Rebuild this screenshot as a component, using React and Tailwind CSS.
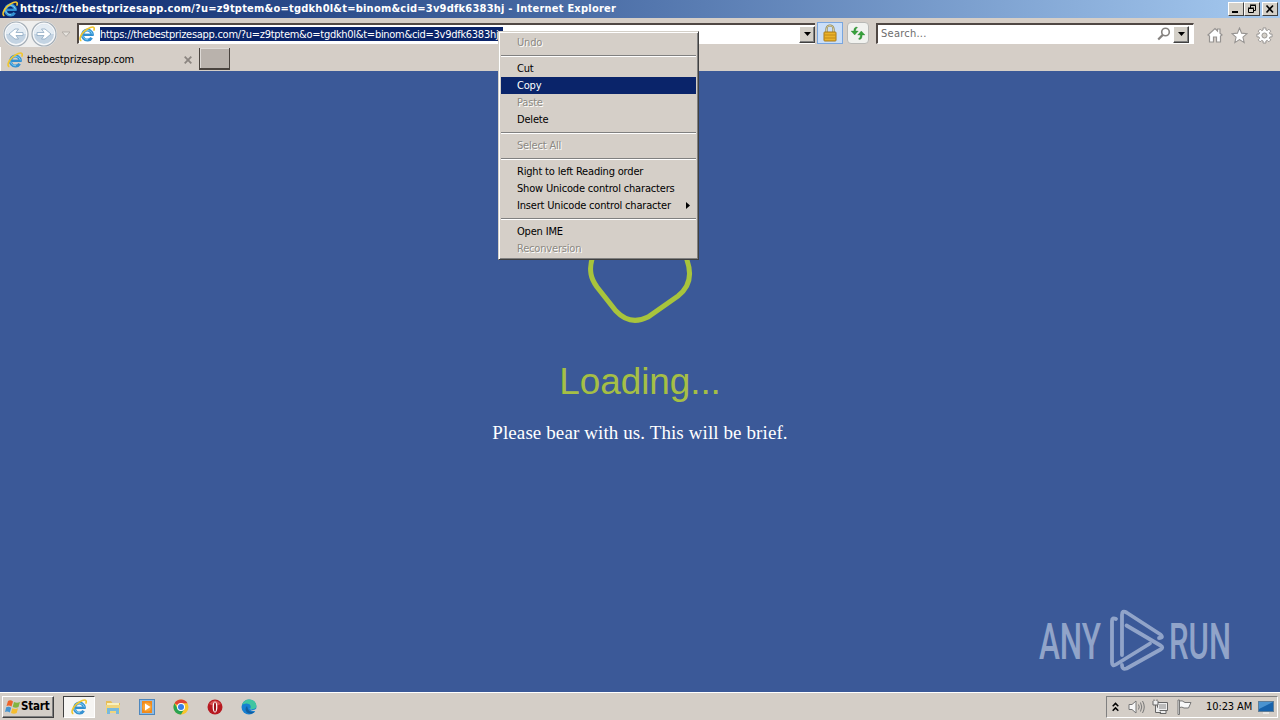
import React from 'react';

const url = 'https://thebestprizesapp.com/?u=z9tptem&o=tgdkh0l&t=binom&cid=3v9dfk6383hj';

const menuItems = [
  { label: 'Undo', disabled: true },
  { separator: true },
  { label: 'Cut' },
  { label: 'Copy', active: true },
  { label: 'Paste', disabled: true },
  { label: 'Delete' },
  { separator: true },
  { label: 'Select All', disabled: true },
  { separator: true },
  { label: 'Right to left Reading order' },
  { label: 'Show Unicode control characters' },
  { label: 'Insert Unicode control character', submenu: true },
  { separator: true },
  { label: 'Open IME' },
  { label: 'Reconversion', disabled: true },
];

const IeIcon = ({ className }) => (
  <svg viewBox="0 0 16 16" className={className} fill="none">
    <path d="M14.700 8.800H5" stroke="#2f8fd0" strokeWidth="2.400" />
    <path d="M13.300 8.800A4.900 5 0 1 0 12.600 11.700" stroke="#3591d2" strokeWidth="3" />
    <path d="M13.500 8.300A5.100 5 0 0 0 3.700 7.700M3.600 9.500A5 5 0 0 0 9 13.700" stroke="#79cdf2" strokeWidth="1" />
    <path d="M2.400 14.700C-0.300 14 1.300 9 5.500 5.200C9.500 1.600 13.900 0 15 1.700C15.500 2.500 15.200 3.600 14.600 4.700" stroke="#f0c62f" strokeWidth="1.600" />
  </svg>
);

const Caret = () => (
  <svg viewBox="0 0 7 4" className="h-1 w-[7px]">
    <path d="M0 0H7L3.500 4Z" fill="#000" />
  </svg>
);

const NavButton = ({ flip }) => (
  <svg viewBox="0 0 26 26" className="h-[26px] w-[26px]">
    <circle cx="13" cy="13" r="12" fill="#f6f8fa" stroke="#a3adb6" strokeWidth="1.200" />
    <circle cx="13" cy="13" r="10" fill="#c3d3e2" />
    <path d="M3 13a10 10 0 0 1 20 0Z" fill="#e4ecf3" />
    <path
      d={flip ? 'M6 11.500H13L10.500 8H14L20 13L14 18H10.500L13 14.500H6Z' : 'M20 11.500H13L15.500 8H12L6 13L12 18H15.500L13 14.500H20Z'}
      fill="#fff"
      stroke="#8ea9c3"
      strokeWidth=".8"
    />
  </svg>
);

const WindowButton = ({ children }) => (
  <div className="flex h-[14px] w-4 items-center justify-center border border-t-white border-l-white border-r-[#404040] border-b-[#404040] bg-[#d4d0c8]">
    <svg viewBox="0 0 12 10" className="h-[10px] w-3" fill="none" stroke="#000">
      {children}
    </svg>
  </div>
);

const DropButton = () => (
  <div className="flex h-[17px] w-4 items-center justify-center border border-t-white border-l-white border-r-[#404040] border-b-[#404040] bg-[#d4d0c8] shadow-[inset_-1px_-1px_0_#808080]">
    <Caret />
  </div>
);

const TitleBar = () => (
  <div className="flex h-[18px] items-center bg-linear-to-r from-[#0a246a] to-[#a6caf0] pl-0.5 pr-0.5">
    <IeIcon className="h-4 w-4" />
    <span className="ml-0.5 pt-px text-[11px] font-bold tracking-[0.225px] text-white">{url} - Internet Explorer</span>
    <div className="ml-auto flex">
      <WindowButton>
        <path d="M2 8H8" strokeWidth="2" />
      </WindowButton>
      <WindowButton>
        <path d="M4.500 4V1.500H9.500V6.500H8M4 1H10M2.500 4.500H7.500V8.500H2.500ZM2 4H8" />
      </WindowButton>
      <div className="ml-0.5">
        <WindowButton>
          <path d="M2.500 1.500L9 8.500M9 1.500L2.500 8.500" strokeWidth="1.700" />
        </WindowButton>
      </div>
    </div>
  </div>
);

const Toolbar = () => (
  <div className="flex h-[29px] items-start pt-[3px] pl-[3px]">
    <div className="flex w-[74px] items-center">
      <div className="flex gap-[2px] rounded-full bg-[#efefee]">
        <NavButton />
        <NavButton flip />
      </div>
      <svg viewBox="0 0 10 7" className="ml-1 h-[7px] w-[10px]">
        <path d="M1 1H9L5 5.500Z" fill="#e6e3de" stroke="#aaa5a0" strokeWidth=".8" />
      </svg>
    </div>
    <div className="mt-[2px] flex h-[21px] w-[738px] items-center border-t-2 border-l-2 border-b border-t-[#504844] border-l-[#504844] border-b-white bg-white">
      <IeIcon className="h-4 w-4" />
      <span className="ml-[5px] h-[14px] w-[403px] bg-[#0a246a] text-[11px] leading-[15px] tracking-[-0.280px] whitespace-nowrap text-white">
        {url}
      </span>
      <div className="ml-auto">
        <DropButton />
      </div>
    </div>
    <div className="mt-px ml-0.5 flex h-[22px] w-[26px] items-center justify-center border border-[#79a6df] bg-[#cbdff8]">
      <svg viewBox="0 0 16 18" className="h-[18px] w-4">
        <path d="M4.500 9V5a3.500 3.500 0 0 1 7 0V9" fill="none" stroke="#8d8353" strokeWidth="2.200" />
        <path d="M4.500 9V5a3.500 3.500 0 0 1 7 0V9" fill="none" stroke="#e8dfae" strokeWidth=".8" />
        <rect x="2" y="8" width="12" height="9" rx=".7" fill="#eab32c" stroke="#a87915" />
        <path d="M2.500 11H13.500M2.500 14H13.500" stroke="#c28a19" />
      </svg>
    </div>
    <div className="mt-px ml-1 flex h-[22px] w-[22px] items-center justify-center rounded-sm border border-[#b9b9b6] bg-[#f1f2ef]">
      <svg viewBox="0 0 16 14" className="h-[14px] w-4" fill="#37a13b" stroke="#247b2b" strokeWidth=".3">
        <path d="M7 1C4.700 1 3.800 2.500 3.800 5H1L4.700 9L8.300 5H5.700C5.700 3.500 6 2.300 7.500 1.800Z" />
        <path d="M9 13.500C11.300 13.500 12.200 12 12.200 9H15L11.300 5L7.700 9H10.300C10.300 11 10 12 8.500 12.700Z" />
      </svg>
    </div>
    <div className="mt-[2px] ml-[7px] flex h-[21px] w-[318px] items-center border-t-2 border-l-2 border-r border-b border-t-[#504844] border-l-[#504844] border-r-white border-b-white bg-white">
      <span className="ml-[3px] pt-px text-[11px] tracking-[0.250px] text-[#6d6d6d]">Search...</span>
      <svg viewBox="0 0 14 14" className="mr-0.5 ml-auto h-[14px] w-[14px]" fill="none" stroke="#85827f">
        <circle cx="8.500" cy="5" r="3.800" strokeWidth="1.600" />
        <path d="M5.800 7.900L1.200 12.500" strokeWidth="2.200" />
      </svg>
      <DropButton />
      <div className="w-1 bg-white" />
    </div>
    <div className="mt-[6px] ml-[13px] flex gap-2">
      <svg viewBox="0 0 16 16" className="h-4 w-4" fill="#fff" stroke="#969391" strokeWidth="1.200">
        <path d="M1 8L8 1.500L10.500 4V2H13V6.200L15 8L13.500 9V15H9.500V10H6.500V15H2.500V9Z" />
      </svg>
      <svg viewBox="0 0 18 18" className="h-[17px] w-[17px]" fill="#fff" stroke="#969391" strokeWidth="1.100">
        <path d="M9 1L11.200 6.500L17 7L12.600 10.700L14 16.500L9 13.300L4 16.500L5.400 10.700L1 7L6.800 6.500Z" />
      </svg>
      <svg viewBox="0 0 18 18" className="h-[17px] w-[17px]" fill="#fff" stroke="#969391">
        <path d="M7.500 1H10.500V3.200L12 3.800L13.600 2.300L15.700 4.400L14.200 6L14.800 7.500H17V10.500H14.800L14.200 12L15.700 13.600L13.600 15.700L12 14.200L10.500 14.800V17H7.500V14.800L6 14.200L4.400 15.700L2.300 13.600L3.800 12L3.200 10.500H1V7.500H3.200L3.800 6L2.300 4.400L4.400 2.300L6 3.800L7.500 3.200Z" />
        <circle cx="9" cy="9" r="2.700" fill="#d4d0c8" />
      </svg>
    </div>
  </div>
);

const Tabs = () => (
  <div className="flex h-6 items-start">
    <div className="flex h-6 w-[199px] items-center border-l border-white pt-px pl-[6px]">
      <IeIcon className="h-4 w-4" />
      <span className="ml-1 pt-px text-[11px] tracking-[-0.150px]">thebestprizesapp.com</span>
      <svg viewBox="0 0 8 8" className="mr-[7px] ml-auto h-2 w-2" stroke="#8b8580" strokeWidth="1.800">
        <path d="M.7 .7L7.300 7.300M7.300 .7L.7 7.300" />
      </svg>
    </div>
    <div className="mt-px h-[22px] w-[31px] border-r border-b-2 border-l border-[#49433e] bg-[#b9b2ac] shadow-[inset_1px_1px_0_#dedad6]" />
  </div>
);

const ContextMenu = () => (
  <div className="absolute top-[31px] left-[498px] w-[201px] border border-t-[#d4d0c8] border-l-[#d4d0c8] border-r-[#404040] border-b-[#404040] bg-[#d5cfc8] p-0.5 text-[11px] shadow-[inset_1px_1px_0_#fff,inset_-1px_-1px_0_#808080]">
    {menuItems.map((item, i) =>
      item.separator ? (
        <div key={i} className="flex h-[9px] items-center">
          <div className="h-0.5 w-full border-t border-b border-t-[#808080] border-b-white" />
        </div>
      ) : (
        <div
          key={i}
          className={`flex h-[17px] items-center justify-between pr-[6px] pl-4 ${
            item.active ? 'bg-[#0a246a] text-white' : ''
          } ${item.disabled ? 'text-[#8c8983] [text-shadow:1px_1px_0_#fff]' : ''}`}
        >
          <span className="pt-px tracking-[-0.180px] whitespace-nowrap">{item.label}</span>
          {item.submenu && (
            <svg viewBox="0 0 4 7" className="h-[7px] w-1">
              <path d="M0 0L4 3.500L0 7Z" />
            </svg>
          )}
        </div>
      )
    )}
  </div>
);

const Watermark = () => (
  <svg
    viewBox="0 0 194 64"
    className="absolute right-[48px] bottom-[19px] h-16 w-[194px] overflow-visible text-[#91a4c9]"
    fill="currentColor"
    fontFamily="Roboto, sans-serif"
    fontSize="50"
    fontWeight="500"
  >
    <text x="1" y="50" textLength="62" lengthAdjust="spacingAndGlyphs">ANY</text>
    <text x="131" y="50" textLength="62" lengthAdjust="spacingAndGlyphs">RUN</text>
    <g fill="none" stroke="currentColor" strokeWidth="3.800" strokeLinecap="round" strokeLinejoin="round">
      <path d="M78 10Q74 8 74 12V53Q74 58 78 55.500L112 34.500" />
      <path d="M84 46V6Q84 .8 88.500 3.500L122.500 25.500Q126 29 121 29" />
      <path d="M88.500 16.500L122.500 36.500Q126 38.500 122.500 40.500L88.500 59.500Q84 61 84 56" />
    </g>
  </svg>
);

const Page = () => (
  <main className="relative flex h-[621px] flex-col items-center bg-[#3b5998]">
    <svg viewBox="0 0 110 110" className="mt-[145px] h-[110px] w-[110px]" fill="none">
      <path
        d="M20 24Q3 40 6 58Q7 64 12 71L31 95Q45 110 63 101L93 80Q110 67 102 44Q90 10 58 9Q35 8 20 24Z"
        stroke="#a8c43c"
        strokeWidth="5"
      />
    </svg>
    <h1 className="mt-[35px] font-['Liberation_Sans',sans-serif] text-[37px] leading-[42px] tracking-[-0.100px] text-[#a5bf45]">
      Loading...
    </h1>
    <p className="mt-[18px] font-['Liberation_Serif',serif] text-[19px] leading-6 tracking-[0.100px] text-white">
      Please bear with us. This will be brief.
    </p>
    <Watermark />
  </main>
);

const TaskBar = () => (
  <div className="flex h-7 items-center border-t border-white bg-[#d4cec7]">
    <div className="ml-0.5 flex h-[22px] w-[52px] items-center border border-t-white border-l-white border-r-[#404040] border-b-[#404040] pl-0.5 shadow-[inset_-1px_-1px_0_#808080]">
      <svg viewBox="0 0 16 16" className="h-4 w-4">
        <path d="M3 2Q5.500 .5 8 2.500L6.500 7.500Q4 5.800 1.500 7Z" fill="#ee6328" />
        <path d="M9 3Q12 4.500 15 3L13.500 8Q11 9.500 7.700 7.900Z" fill="#82b440" />
        <path d="M1.200 8.200Q4 7 6.200 8.700L4.800 13.500Q2.500 12 0 13Z" fill="#4594d0" />
        <path d="M7.300 9.200Q10 10.700 13 9.300L11.700 14Q9 15.500 6 14Z" fill="#f5bd2f" />
      </svg>
      <span className="pt-px text-[11.500px] font-bold tracking-[-0.200px]">Start</span>
    </div>
    <div className="ml-[9px] flex h-[22px] w-8 items-center justify-center border border-t-[#404040] border-l-[#404040] border-r-white border-b-white bg-[#f6f5f3]">
      <IeIcon className="h-4 w-4" />
    </div>
    <div className="ml-[10px] flex items-center gap-[18px]">
      <svg viewBox="0 0 16 16" className="h-4 w-4">
        <path d="M1 2H6L7.500 4H15V14H1Z" fill="#e7bd57" />
        <path d="M2 4H14V8H2Z" fill="#f8f0bd" />
        <path d="M1 6H15V14H1Z" fill="#f0d57d" />
        <path d="M2 15V9H14V15H11V12H5V15Z" fill="#78b9dd" />
      </svg>
      <svg viewBox="0 0 16 16" className="h-4 w-4">
        <rect x=".5" y=".5" width="15" height="15" fill="#8dbbe4" stroke="#4e87bd" />
        <rect x="3" y="2" width="10" height="12" fill="#f08a1c" />
        <circle cx="8" cy="8" r="4.500" fill="#f9a332" />
        <path d="M6 4.500L11.500 8L6 11.500Z" fill="#fff" />
      </svg>
      <svg viewBox="0 0 16 16" className="h-4 w-4">
        <circle cx="8" cy="8" r="7.500" fill="#f8c52b" />
        <path d="M8 8L1.500 4.250A7.500 7.500 0 0 1 14.500 4.250H8Z" fill="#df4334" />
        <path d="M1.500 4.250A7.500 7.500 0 0 0 8 15.500L11.250 9.900L8 8L4.750 9.900Z" fill="#29a352" />
        <circle cx="8" cy="8" r="4" fill="#fff" />
        <circle cx="8" cy="8" r="3" fill="#397fe6" />
      </svg>
      <svg viewBox="0 0 16 16" className="h-4 w-4">
        <circle cx="8" cy="8" r="7.500" fill="#b71920" />
        <path d="M2 5Q8-2 14 5Q8 8 2 5Z" fill="#d75252" />
        <ellipse cx="8" cy="8" rx="2.400" ry="5.500" fill="#fff" />
        <ellipse cx="8" cy="8" rx="1.100" ry="4.700" fill="#9a1117" />
      </svg>
      <svg viewBox="0 0 16 16" className="h-4 w-4">
        <circle cx="8" cy="8" r="7.500" fill="#167fd1" />
        <path d="M1 6Q3 0 9 .5Q15.500 1.500 15.500 7Q15 10.500 10.500 10.200Q8.500 10 9.700 8.500Q10 5 6 4.500Q2.500 4.300 1 6Z" fill="#40c5a1" />
        <path d="M9.700 8.500Q7.500 10 10.500 10.800Q13 11.500 15 9.800L15.500 8V12L13 12Q9 12 9 9Z" fill="#d4cec7" />
        <path d="M6 7Q3 10 6 13.500Q9.500 16 13.500 13Q8 13.500 7 10Z" fill="#145d9d" />
      </svg>
    </div>
    <div className="mr-0.5 ml-auto flex h-[22px] w-[172px] items-center border border-t-[#808080] border-l-[#808080] border-r-white border-b-white pl-[5px]">
      <svg viewBox="0 0 7 10" className="h-[10px] w-[7px]" fill="none" stroke="#000" strokeWidth="1.500">
        <path d="M.7 4.200L3.500 1.400L6.300 4.200M.7 8.700L3.500 5.900L6.300 8.700" />
      </svg>
      <svg viewBox="0 0 17 16" className="ml-[9px] h-4 w-[17px]" fill="#f7f7f7" stroke="#777" strokeWidth="1">
        <path d="M1 5.500H4L8 2V14L4 10.500H1Z" />
        <path d="M10.500 5.500Q12 8 10.500 10.500M12.500 3.500Q15 8 12.500 12.500M14.500 2Q18 8 14.500 14" fill="none" />
      </svg>
      <svg viewBox="0 0 17 16" className="ml-[7px] h-4 w-[17px]" fill="#eee" stroke="#666">
        <path d="M5.500 3.500H15.500V11.500H5.500ZM8 12V14.500H14V12" />
        <path d="M7 5H14V10H7Z" fill="#bbb" stroke="none" />
        <path d="M1 2V6H6V2M3.500 6V13.500H9M2 2V0.500M5 2V0.500" />
      </svg>
      <svg viewBox="0 0 17 16" className="ml-[7px] h-4 w-[17px]" fill="#f8f8f8" stroke="#777">
        <path d="M2 1H3.500V15.500H2ZM3.500 2Q6 1 9 3.500H15L12.500 9H8Q6 7.500 3.500 8.500Z" />
      </svg>
      <span className="ml-[13px] pt-px text-[11px] tracking-[-0.100px] whitespace-nowrap">10:23 AM</span>
      <svg viewBox="0 0 16 14" className="mr-[3px] ml-auto h-[14px] w-4">
        <rect x=".5" y="1.500" width="15" height="10" fill="#1762ab" stroke="#5f7d97" />
        <path d="M1 2H15L1 9Z" fill="#4a93d0" />
        <path d="M5 13H11" stroke="#fff" />
      </svg>
    </div>
  </div>
);

const App = () => {
  return (
    <div className="relative h-[720px] w-[1280px] overflow-hidden bg-[#d5cec7] font-['DejaVu_Sans_Condensed','DejaVu_Sans',sans-serif] text-black">
      <TitleBar />
      <Toolbar />
      <Tabs />
      <Page />
      <TaskBar />
      <ContextMenu />
    </div>
  );
};

export default App;
